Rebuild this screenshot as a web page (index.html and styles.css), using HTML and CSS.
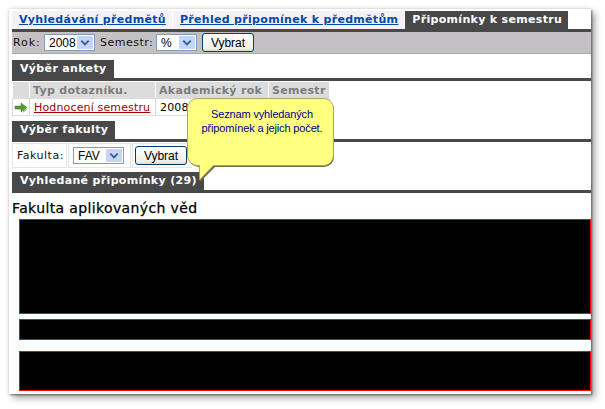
FILE: index.html
```html
<!DOCTYPE html>
<html lang="cs">
<head>
<meta charset="utf-8">
<title>Připomínky k semestru</title>
<link rel="stylesheet" href="styles.css">
</head>
<body>
<main class="frame">
  <nav class="tabs">
    <a class="tab" href="#">Vyhledávání předmětů</a>
    <a class="tab" href="#">Přehled připomínek k předmětům</a>
    <span class="tab tab-active">Připomínky k semestru</span>
  </nav>
  <form class="filter">
    <label class="lab-rok">Rok:</label>
    <span class="select sel-year"><span class="val">2008</span><svg class="arrow" viewBox="0 0 16 14"><path d="M4 5l4 4 4-4" /></svg></span>
    <label class="lab-sem">Semestr:</label>
    <span class="select sel-sem"><span class="val">%</span><svg class="arrow" viewBox="0 0 16 14"><path d="M4 5l4 4 4-4" /></svg></span>
    <button type="button" class="btn btn-filter">Vybrat</button>
  </form>

  <section class="sec sec-anketa">
    <h2 class="sec-title">Výběr ankety</h2>
    <table class="grid">
      <thead>
        <tr><th class="c0"></th><th class="c1">Typ dotazníku.</th><th class="c2">Akademický rok</th><th class="c3">Semestr</th></tr>
      </thead>
      <tbody>
        <tr>
          <td class="c0"><svg class="go" viewBox="0 0 14 12"><path class="go-s" d="M2 8h7v3l5-4z"/><path class="go-a" d="M1 4h6V1l6 4.500L7 10V7H1z"/></svg></td>
          <td class="c1"><a href="#" class="lnk">Hodnocení semestru</a></td>
          <td class="c2">2008</td>
          <td class="c3"></td>
        </tr>
      </tbody>
    </table>
  </section>

  <section class="sec sec-fak">
    <h2 class="sec-title">Výběr fakulty</h2>
    <div class="fak-row">
      <div class="fak-cell fc1">Fakulta:</div>
      <div class="fak-cell fc2"><span class="select sel-fak"><span class="val">FAV</span><svg class="arrow" viewBox="0 0 16 14"><path d="M4 5l4 4 4-4" /></svg></span></div>
      <div class="fak-cell fc3"><button type="button" class="btn btn-fak">Vybrat</button></div>
    </div>
  </section>

  <section class="sec sec-res">
    <h2 class="sec-title">Vyhledané připomínky (29)</h2>
    <h3 class="fak-name">Fakulta aplikovaných věd</h3>
    <div class="blk blk1"></div>
    <div class="blk blk2"></div>
    <div class="blk blk3"></div>
  </section>

  <aside class="tip">
    <svg class="tip-bg" viewBox="0 0 150 86">
      <path class="tip-shadow" d="M12 2h125a10 10 0 0 1 10 10v47a10 10 0 0 1-10 10H28L13 84V69h-1A10 10 0 0 1 2 59V12A10 10 0 0 1 12 2z"/>
      <path class="tip-body" d="M10.500 .5h126a10 10 0 0 1 10 10v47a10 10 0 0 1-10 10H26.500L12.500 82V67.500h-2a10 10 0 0 1-10-10v-47a10 10 0 0 1 10-10z"/>
    </svg>
    <p class="tip-text">Seznam vyhledaných<br>připomínek a jejich počet.</p>
  </aside>
</main>
</body>
</html>
```
FILE: styles.css
```css
* { box-sizing: border-box; }
html, body { margin: 0; padding: 0; background: #fff; }
body { width: 605px; height: 409px; overflow: hidden; position: relative; font-family: "DejaVu Sans", sans-serif; }

.frame {
  position: relative;
  margin: 9px 0 0 9px;
  width: 582px;
  height: 385px;
  padding: 2px 0 0 3px;
  background: #fff;
  box-shadow: 1px 1px 2px rgba(0,0,0,.45), 4px 4px 7px rgba(0,0,0,.35), 0 0 5px rgba(0,0,0,.12);
}

.tabs { display: flex; height: 18px; gap: 1px; }
.tab {
  height: 18px;
  line-height: 18px;
  padding: 0 6px 0 7px;
  font-size: 11px;
  font-weight: bold;
  letter-spacing: .31px;
  white-space: nowrap;
  background: #f6f1f6;
  color: #0049a8;
  text-decoration: underline;
}
.tab-active { background: #484848; color: #fff; text-decoration: none; }

.filter {
  display: flex;
  align-items: center;
  height: 25px;
  border-top: 3px solid #484848;
  border-bottom: 1px solid #a9a9a9;
  background: #c3c1c3;
  font-size: 11px;
  letter-spacing: .5px;
  color: #111;
}
.lab-rok { flex: 0 0 32px; padding-left: 1px; letter-spacing: .9px; }
.lab-sem { flex: 0 0 61px; padding-left: 5px; }

.select {
  display: flex;
  flex: none;
  align-items: center;
  justify-content: space-between;
  height: 17px;
  border: 1px solid #7f9db9;
  background: #fff;
  padding: 1px 1px 1px 4px;
  font-family: "Liberation Sans", sans-serif;
  font-size: 12px;
  letter-spacing: 0;
  color: #000;
}
.sel-year { width: 51px; }
.sel-sem { width: 41px; margin-right: 5px; }
.sel-fak { width: 51px; }
.arrow { width: 16px; height: 13px; background: #c4d5f7; border-radius: 1px; }
.arrow path { fill: none; stroke: #3f5d8f; stroke-width: 2; }

.btn {
  flex: none;
  height: 19px;
  padding: 0;
  border: 1px solid #003c74;
  border-radius: 3px;
  background: linear-gradient(#fff, #f0efe6 85%, #dcd8c8);
  font-family: "Liberation Sans", sans-serif;
  font-size: 12px;
  color: #000;
}
.btn-filter { width: 52px; }
.btn-fak { width: 52px; }

.sec-title {
  display: block;
  width: max-content;
  margin: 0;
  height: 18px;
  line-height: 18px;
  padding: 0 7px 0 8px;
  font-size: 11px;
  font-weight: bold;
  letter-spacing: .34px;
  background: #484848;
  color: #fff;
  white-space: nowrap;
}

.sec-anketa { margin-top: 6px; }
.grid {
  border-collapse: separate;
  border-spacing: 1px;
  border-top: 3px solid #484848;
  display: block;
  width: 579px;
  height: 37px;
  font-size: 11px;
  margin: 0;
}
.grid th, .grid td { padding: 0; height: 16px; text-align: left; }
.grid th { background: #dcdcdc; color: #7c7c7c; font-weight: bold; letter-spacing: .3px; padding-left: 3px; white-space: nowrap; }
.grid td { padding-left: 4px; white-space: nowrap; background: #fff; letter-spacing: .15px; outline: 1px solid #dcdcdc; }
.grid th.c0, .grid td.c0 { width: 16px; padding: 0; }
.grid th.c1 { width: 125px; }
.grid th.c2 { width: 112px; }
.grid th.c3 { width: 60px; }
.go { display: block; width: 14px; height: 12px; margin: 2px 0 0 1px; }
.go-a { fill: #5a9a2c; stroke: #3f7a1c; stroke-width: .5; }
.go-s { fill: #bbb; }
.lnk { color: #a80000; text-decoration: underline; }

.sec-fak { margin-top: 6px; }
.fak-row {
  display: flex;
  height: 29px;
  width: 579px;
  border-top: 3px solid #484848;
  padding: 1px 0 0;
  font-size: 11px;
  letter-spacing: .5px;
}
.fak-cell { display: flex; align-items: center; height: 25px; border: 1px solid #e4e4e4; margin-right: 1px; }
.fc1 { width: 55px; padding-left: 4px; color: #111; }
.fc2 { width: 63px; padding-left: 4px; }
.fc3 { width: 60px; padding-left: 2px; border-right: 0; }

.sec-res { margin-top: 4px; }
.fak-name {
  margin: 0;
  border-top: 3px solid #484848;
  width: 579px;
  padding-top: 7px;
  height: 29px;
  font-size: 14px;
  font-weight: normal;
  letter-spacing: .37px;
  line-height: 16px;
  color: #000;
  -webkit-text-stroke: .25px #000;
}
.blk { margin-left: 7px; width: 572px; background: #000; border: 1px solid #f00; }
.blk1 { height: 95px; }
.blk2 { height: 21px; margin-top: 5px; }
.blk3 { height: 40px; margin-top: 11px; }

.tip { position: absolute; left: 178px; top: 89px; width: 150px; height: 86px; }
.tip-bg { position: absolute; left: 0; top: 0; width: 150px; height: 86px; }
.tip-shadow { fill: #6b6b45; }
.tip-body { fill: #ffff80; stroke: #a8a860; stroke-width: 1; }
.tip-text {
  position: relative;
  margin: 0;
  padding-top: 9px;
  width: 150px;
  text-align: center;
  font-family: "Liberation Sans", sans-serif;
  font-size: 11px;
  letter-spacing: -.15px;
  line-height: 14px;
  color: #00008b;
}
```
